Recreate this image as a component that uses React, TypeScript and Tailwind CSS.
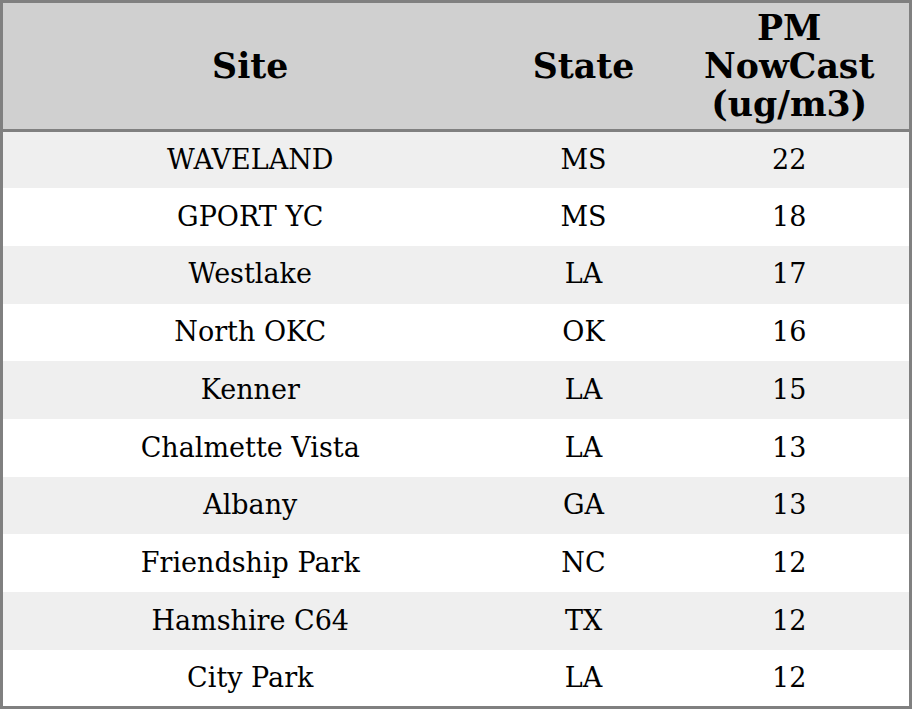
const rows: [string, string, number][] = [
  ["WAVELAND", "MS", 22],
  ["GPORT YC", "MS", 18],
  ["Westlake", "LA", 17],
  ["North OKC", "OK", 16],
  ["Kenner", "LA", 15],
  ["Chalmette Vista", "LA", 13],
  ["Albany", "GA", 13],
  ["Friendship Park", "NC", 12],
  ["Hamshire C64", "TX", 12],
  ["City Park", "LA", 12],
];

export default function App() {
  return (
    <div className="w-[912px] h-[711px] bg-white font-['DejaVu_Serif',serif] text-black">
      <table className="w-[912px] border-collapse border-[3px] border-[#808080]">
        <colgroup>
          <col className="w-[496px]" />
          <col className="w-[172px]" />
          <col />
        </colgroup>
        <thead>
          <tr className="bg-[#d0d0d0] h-[129px] border-b-[3px] border-[#808080]">
            <th className="text-[34.7px] font-bold text-center p-0">Site</th>
            <th className="text-[34.7px] font-bold text-center p-0">State</th>
            <th className="text-[34.7px] font-bold text-center p-0 leading-[38px]">
              PM
              <br />
              NowCast
              <br />
              (ug/m3)
            </th>
          </tr>
        </thead>
        <tbody>
          {rows.map(([site, state, value], i) => (
            <tr key={site} className={`h-[57.7px] ${i % 2 === 0 ? "bg-[#efefef]" : "bg-white"}`}>
              <td className="text-[27px] text-center p-0">{site}</td>
              <td className="text-[27px] text-center p-0">{state}</td>
              <td className="text-[27px] text-center p-0">{value}</td>
            </tr>
          ))}
        </tbody>
      </table>
    </div>
  );
}
